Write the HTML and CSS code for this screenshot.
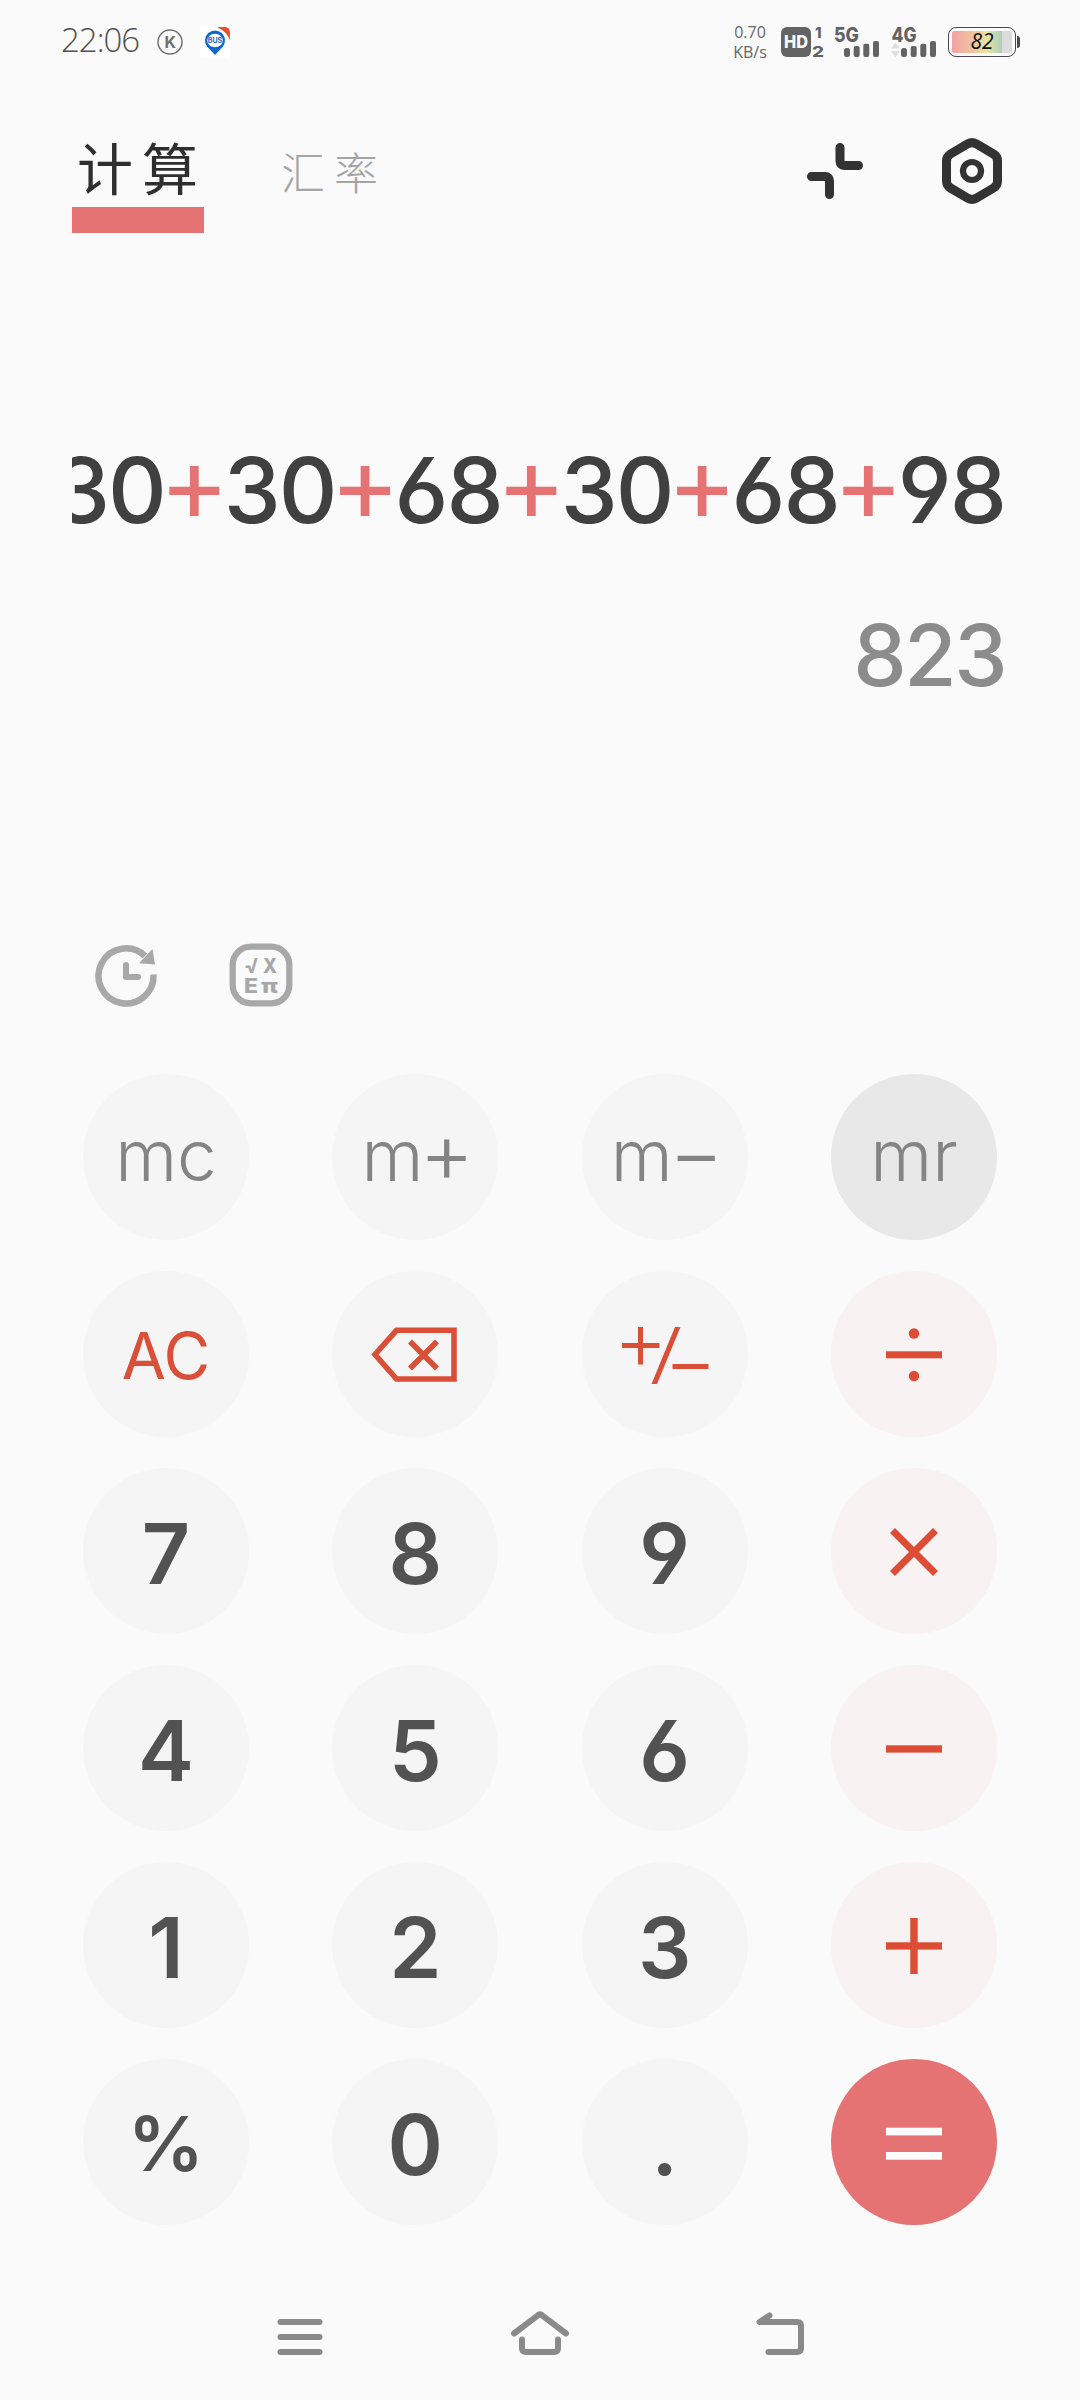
FILE: index.html
```html
<!DOCTYPE html>
<html lang="zh-CN">
<head>
  <meta charset="UTF-8">
  <meta name="viewport" content="width=device-width, initial-scale=1.0">
  <title>计算</title>
  <link rel="stylesheet" href="styles.css">
</head>
<body>
  <div class="status-bar">
    <span class="time">22:06</span>
    <svg class="k-icon" width="26" height="26" viewBox="0 0 26 26">
      <circle cx="13" cy="13" r="12" fill="none" stroke="#707070" stroke-width="1.5"/>
      <text x="13.2" y="18.6" text-anchor="middle" class="k-text">K</text>
    </svg>
    <svg class="bus-icon" width="30" height="32" viewBox="0 0 30 32">
      <rect width="30" height="32" rx="2" fill="#fff"/>
      <path d="M17 1h8q5 0 5 6v7q-3-8-13-13z" fill="#e8502f"/>
      <path d="M15 29L7 20.5a10 10 0 1 1 16 0z" fill="#0f67cf"/>
      <ellipse cx="15" cy="14.500" rx="7.800" ry="6.800" fill="#fff"/>
      <text x="15" y="17" text-anchor="middle" class="bus-text">BUS</text>
    </svg>
    <div class="speed"><span>0.70</span><span>KB/s</span></div>
    <svg class="signals" width="158" height="32" viewBox="0 0 158 32" fill="#636363">
      <rect x="0" y="1" width="30" height="30" rx="6"/>
      <text x="3" y="22" textLength="24" lengthAdjust="spacingAndGlyphs" class="hd-text">HD</text>
      <text x="34" y="12" class="sim-text">1</text>
      <text x="31" y="31" textLength="12" lengthAdjust="spacingAndGlyphs" class="sim-text">2</text>
      <text x="53" y="15.500" textLength="25" lengthAdjust="spacingAndGlyphs" class="net-text">5G</text>
      <rect x="63" y="22" width="6" height="9" rx="2.500"/>
      <rect x="72.700" y="20" width="6" height="11" rx="2"/>
      <rect x="82.300" y="17.700" width="6" height="13.300" rx="2"/>
      <rect x="92" y="15" width="6" height="16" rx="2"/>
      <text x="110.500" y="15.500" textLength="25" lengthAdjust="spacingAndGlyphs" class="net-text">4G</text>
      <path d="M110 22.500l4.500-6 4.500 6zM110 25l4.500 6 4.500-6z" fill="#dedede"/>
      <rect x="120" y="22" width="6" height="9" rx="2.500"/>
      <rect x="129.700" y="20" width="6" height="11" rx="2"/>
      <rect x="139.300" y="17.700" width="6" height="13.300" rx="2"/>
      <rect x="149" y="15" width="6" height="16" rx="2"/>
    </svg>
    <div class="battery"><span class="battery-level">82</span></div>
  </div>

  <div class="header">
    <div class="tab active">计算</div>
    <div class="tab">汇率</div>
    <svg class="collapse-icon" width="56" height="56" viewBox="0 0 56 56" fill="none" stroke="#333" stroke-width="9" stroke-linecap="round">
      <path d="M33 4.500V18q0 4.500 4.500 4.500h14M4.500 33.500H18q4.500 0 4.500 4.500v13.500"/>
    </svg>
    <svg width="60" height="66" viewBox="0 0 60 66" fill="none" stroke="#333">
      <path stroke-width="9" d="M26 5.700q4-2.200 8 0L51.500 16q4 2.400 4 7v20q0 4.600-4 7L34 60.300q-4 2.200-8 0L8.500 50q-4-2.400-4-7V23q0-4.600 4-7z"/>
      <circle cx="30" cy="33" r="9" stroke-width="6.200"/>
    </svg>
  </div>

  <div class="display">
    <div class="expression">30<i>+</i>30<i>+</i>68<i>+</i>30<i>+</i>68<i>+</i>98</div>
    <div class="result">823</div>
  </div>

  <div class="tools">
    <svg width="64" height="64" viewBox="0 0 64 64" fill="none" stroke="#a8a8a8">
      <path stroke-width="6.500" d="M59.500 31.500A27.500 27.500 0 1 1 51 13"/>
      <path stroke="none" fill="#a8a8a8" d="M58.500 6L45 20.300l16 1.300z"/>
      <path stroke-width="6" stroke-linecap="round" stroke-linejoin="round" d="M32 22v12h12"/>
    </svg>
    <svg width="64" height="64" viewBox="0 0 64 64">
      <rect x="3.700" y="3.700" width="56.600" height="56.600" rx="18" fill="none" stroke="#a8a8a8" stroke-width="6.300"/>
      <text x="15" y="30" class="sci-text" textLength="15" lengthAdjust="spacingAndGlyphs">√</text>
      <text x="34" y="30" class="sci-text" textLength="14" lengthAdjust="spacingAndGlyphs">X</text>
      <text x="15" y="50" class="sci-text" textLength="14" lengthAdjust="spacingAndGlyphs">E</text>
      <text x="32" y="50" class="sci-text" textLength="17" lengthAdjust="spacingAndGlyphs">π</text>
    </svg>
  </div>

  <div class="keypad">
    <button class="key memory">mc</button>
    <button class="key memory">m<span class="sign">+</span></button>
    <button class="key memory">m<span class="sign">−</span></button>
    <button class="key memory pressed">mr</button>

    <button class="key action">AC</button>
    <button class="key action">
      <svg width="86" height="56" viewBox="0 0 86 56" fill="none" stroke="#d94f37" stroke-width="5.600">
        <path d="M3 27.500L24.500 3.300H82V52H24.500z"/>
        <path d="M38 14.500l27 27M65 14.500l-27 27"/>
      </svg>
    </button>
    <button class="key action">
      <svg width="88" height="58" viewBox="0 0 88 58" fill="none" stroke="#d94f37" stroke-width="5">
        <path d="M1 19.500h37.500M19.500 1v37.500M51.500 40.500h36"/>
        <path d="M54 1h5.500L36 58h-5.500z" fill="#d94f37" stroke="none"/>
      </svg>
    </button>
    <button class="key operator">
      <svg width="56" height="56" viewBox="0 0 56 56" fill="#dd4c35">
        <rect y="24.300" width="56" height="7"/>
        <circle cx="28" cy="6.500" r="5.200"/>
        <circle cx="28" cy="49" r="5.200"/>
      </svg>
    </button>

    <button class="key">7</button>
    <button class="key">8</button>
    <button class="key">9</button>
    <button class="key operator">
      <svg width="56" height="56" viewBox="0 0 56 56" stroke="#dd4c35" stroke-width="7">
        <path d="M6.500 6.500l43 43M49.500 6.500l-43 43"/>
      </svg>
    </button>

    <button class="key">4</button>
    <button class="key">5</button>
    <button class="key">6</button>
    <button class="key operator">
      <svg width="56" height="56" viewBox="0 0 56 56" fill="#dd4c35"><rect y="24.300" width="56" height="7.300"/></svg>
    </button>

    <button class="key">1</button>
    <button class="key">2</button>
    <button class="key">3</button>
    <button class="key operator">
      <svg width="56" height="56" viewBox="0 0 56 56" fill="#dd4c35">
        <rect y="24.300" width="56" height="7.300"/>
        <rect x="24.300" width="7.400" height="56"/>
      </svg>
    </button>

    <button class="key percent">%</button>
    <button class="key">0</button>
    <button class="key">.</button>
    <button class="key equals">
      <svg width="56" height="56" viewBox="0 0 56 56" fill="#fff">
        <rect y="11.700" width="56" height="7.700"/>
        <rect y="36" width="56" height="7.700"/>
      </svg>
    </button>
  </div>

  <div class="nav-bar">
    <svg width="46" height="46" viewBox="0 0 46 46">
      <path d="M3.500 8h39M3.500 23h39M3.500 38h39"/>
    </svg>
    <svg width="60" height="46" viewBox="0 0 60 46">
      <path d="M4 19.500L28.500.8q1.500-1 3 0L56 19.500M12 25.500V34q0 4 4 4h28q4 0 4-4v-8.500"/>
    </svg>
    <svg width="50" height="46" viewBox="0 0 50 46">
      <path d="M13.500 1.500L3.500 8H41q4 0 4 4v22q0 4-4 4H12.500"/>
    </svg>
  </div>
</body>
</html>
```
FILE: styles.css
```css
* {
  box-sizing: border-box;
}
body {
  margin: 0;
  width: 1080px;
  height: 2400px;
  background-color: #fafafa;
  font-family: Inter, "Noto Sans CJK SC", sans-serif;
  overflow: hidden;
}
svg {
  display: block;
  overflow: visible;
  flex: none;
}

/* status bar */
.status-bar {
  display: flex;
  align-items: center;
  height: 84px;
  padding: 0 64px 0 61px;
}
.time {
  width: 96px;
  font-family: "Open Sans", sans-serif;
  font-size: 33px;
  font-weight: 300;
  line-height: 40px;
  letter-spacing: -1px;
  color: #505050;
  padding-bottom: 4px;
}
.k-text {
  font: 700 16px Inter, sans-serif;
  fill: #707070;
}
.bus-icon {
  margin-left: 17px;
}
.bus-text {
  font: 700 7px Inter, sans-serif;
  fill: #0f67cf;
}
.speed {
  display: flex;
  flex-direction: column;
  align-items: center;
  width: 40px;
  margin-left: auto;
  font-family: "Open Sans", sans-serif;
  font-size: 16px;
  line-height: 20px;
  color: #666;
}
.signals {
  margin-left: 11px;
}
.hd-text {
  font: 800 17px Inter, sans-serif;
  fill: #fafafa;
}
.sim-text {
  font: 800 15px Inter, sans-serif;
}
.net-text {
  font: 800 20px Inter, sans-serif;
}
.battery {
  position: relative;
  width: 68px;
  height: 30px;
  margin-left: 9px;
  padding: 3px;
  border: 1.5px solid #4a4550;
  border-radius: 8px;
}
.battery::after {
  content: "";
  position: absolute;
  right: -5px;
  top: 8px;
  width: 3px;
  height: 12px;
  border-radius: 0 3px 3px 0;
  background: #4a4550;
}
.battery-level {
  display: block;
  height: 22px;
  border-radius: 2px;
  font: italic 400 21px/21px "Open Sans", sans-serif;
  text-align: center;
  color: #111;
  background: linear-gradient(90deg, #f3a2a2 0, #efc9a0 40%, #ece3a2 57%, #a9d0b9 83%, #dcdcdc 83%);
}

/* tabs */
.header {
  display: flex;
  align-items: center;
  height: 174px;
  padding: 0 78px 0 72px;
}
.tab {
  height: 124px;
  font-weight: 300;
  font-size: 44px;
  line-height: 131px;
  letter-spacing: 9px;
  white-space: nowrap;
  color: #a4a4a4;
}
.tab.active {
  width: 132px;
  margin-right: 77px;
  padding-left: 5px;
  font-size: 56px;
  font-weight: 400;
  line-height: 123px;
  color: #2e2e2e;
  background: linear-gradient(#e57373, #e57373) 0 98px / 132px 26px no-repeat;
}
.collapse-icon {
  margin-left: auto;
  margin-right: 79px;
}

/* display */
.display {
  height: 662px;
  margin: 0 75px 0 72px;
  padding-top: 176px;
  font-feature-settings: "cv03", "cv04";
}
.expression {
  display: flex;
  justify-content: flex-end;
  overflow: hidden;
  height: 112px;
  line-height: 112px;
  font-size: 91px;
  font-weight: 500;
  letter-spacing: -2px;
  color: #404040;
}
.expression i {
  display: flex;
  justify-content: center;
  width: 59px;
  font-style: normal;
  font-size: 106px;
  font-weight: 400;
  line-height: 97px;
  letter-spacing: 0;
  color: #e57373;
}
.result {
  margin-top: 58px;
  font-size: 85px;
  line-height: 104px;
  font-weight: 500;
  letter-spacing: -2.5px;
  text-align: right;
  color: #8c8c8c;
}

.tools {
  display: flex;
  gap: 71px;
  height: 154px;
  padding: 23px 94px 0;
}
.sci-text {
  font: 800 20px/1 Inter, sans-serif;
  fill: #a8a8a8;
}

/* keypad */
.keypad {
  display: grid;
  grid-template-columns: repeat(4, 166px);
  grid-auto-rows: 166px;
  justify-content: space-between;
  row-gap: 31px;
  padding: 0 83px;
}
.key {
  display: flex;
  align-items: center;
  justify-content: center;
  border: none;
  border-radius: 50%;
  background: #f5f5f5;
  padding: 4px 0 0;
  font-family: inherit;
  font-size: 84px;
  font-weight: 600;
  font-feature-settings: "cv03", "cv04";
  color: #525252;
}
.key.memory {
  padding: 0 0 4px;
  font-size: 71px;
  font-weight: 300;
  color: #848484;
}
.key .sign {
  margin: 0 -5px 0 -4px;
  padding-bottom: 7px;
  font-size: 84px;
}
.key.pressed {
  background: #e8e8e8;
}
.key.action {
  padding: 2px 0 0;
  font-size: 64px;
  font-weight: 400;
  color: #d94f37;
}
.key.operator {
  padding: 2px 0 0;
  background: #f8f2f2;
}
.key.percent {
  padding: 2px 0 0;
  font-size: 76px;
  font-weight: 600;
}
.key.equals {
  padding: 3px 0 0;
  background: #e57373;
}

/* system navigation */
.nav-bar {
  display: flex;
  justify-content: space-between;
  padding: 89px 274px 0 277px;
}
.nav-bar svg {
  fill: none;
  stroke: #8a8a8a;
  stroke-width: 6;
  stroke-linecap: round;
  stroke-linejoin: round;
}
```
